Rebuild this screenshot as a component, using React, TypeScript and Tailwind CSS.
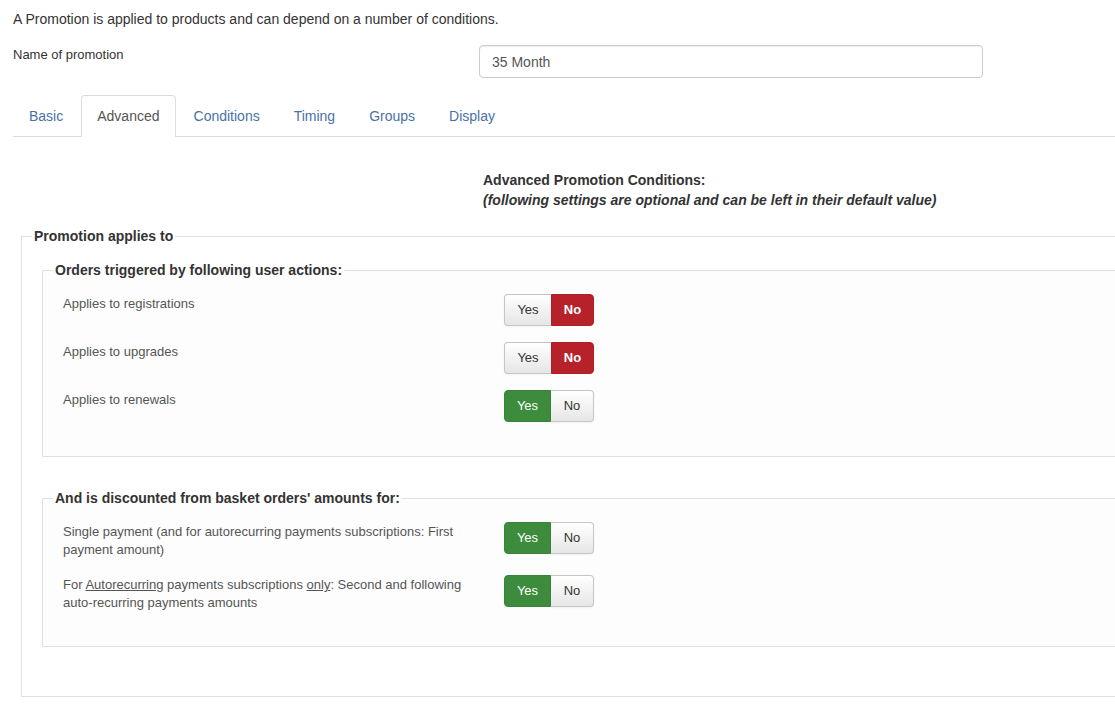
import React from "react";

function Toggle({ value }: { value: boolean }) {
  const inactive =
    "bg-gradient-to-b from-white to-[#e6e6e6] text-[#333] border border-[#c5c5c5] shadow-[inset_0_1px_0_rgba(255,255,255,0.2),0_1px_2px_rgba(0,0,0,0.05)]";
  return (
    <div className="flex h-[32px] shrink-0 text-[13px] leading-[18px]">
      <div
        className={
          "w-[47px] flex items-center justify-center rounded-l-[4px] " +
          (value ? "bg-[#3d8b3d] text-white border border-[#3a833a]" : inactive + " border-r-0")
        }
      >
        Yes
      </div>
      <div
        className={
          "w-[43px] flex items-center justify-center rounded-r-[4px] " +
          (!value ? "bg-[#b7222a] text-white font-bold border border-[#b01f27]" : inactive + " border-l-0")
        }
      >
        No
      </div>
    </div>
  );
}

function Row({ label, value }: { label: React.ReactNode; value: boolean }) {
  return (
    <div className="flex items-start">
      <div className="w-[441px] pt-px pr-[30px] text-[13px] leading-[18px] text-[#555]">{label}</div>
      <Toggle value={value} />
    </div>
  );
}

export default function App() {
  const tabs = ["Basic", "Advanced", "Conditions", "Timing", "Groups", "Display"];
  return (
    <div
      className="w-[1115px] h-[713px] overflow-hidden bg-white text-[#333]"
      style={{ fontFamily: '"Liberation Sans", Arial, sans-serif' }}
    >
      <div className="pl-[13px] w-[1200px]">
        <p className="pt-[9px] text-[14px] leading-[20px] text-[#333]">
          A Promotion is applied to products and can depend on a number of conditions.
        </p>
        <div className="flex items-start mt-[16px]">
          <div className="w-[466px] pt-px text-[13px] leading-[18px] text-[#333]">Name of promotion</div>
          <div className="w-[504px] h-[33px] border border-[#ccc] rounded-[4px] shadow-[inset_0_1px_1px_rgba(0,0,0,0.075)] flex items-center pl-[12px] pt-[2px] text-[14px] text-[#555]">
            35 Month
          </div>
        </div>

        <div className="mt-[17px] flex border-b border-[#ddd] w-[1102px]">
          {tabs.map((t, i) => (
            <div
              key={t}
              className={
                "mr-[2px] px-[15px] py-[10px] text-[14px] leading-[20px] border border-b-0 rounded-t-[4px] " +
                (i === 1
                  ? "border-[#ddd] bg-white text-[#555] -mb-px pb-[11px]"
                  : "border-transparent text-[#4872a8]")
              }
            >
              {t}
            </div>
          ))}
        </div>

        <div className="ml-[470px] mt-[33px] text-[14px] leading-[20px] font-bold text-[#333]">
          <div>Advanced Promotion Conditions:</div>
          <div className="italic">(following settings are optional and can be left in their default value)</div>
        </div>

        <fieldset className="ml-[8px] mt-[16px] w-[1130px] border border-[#e0e0e0] pl-[10px] pr-[10px] pb-[49px]">
          <legend className="px-[2px] text-[14px] leading-[20px] font-bold text-[#333]">Promotion applies to</legend>
          <fieldset className="mt-[14px] ml-[10px] border border-[#e0e0e0] bg-[#fdfdfd] pl-[10px] pb-[34px]">
            <legend className="px-[2px] text-[14px] leading-[20px] font-bold text-[#333]">
              Orders triggered by following user actions:
            </legend>
            <div className="ml-[10px] mt-[14px] flex flex-col gap-[16px]">
              <Row label="Applies to registrations" value={false} />
              <Row label="Applies to upgrades" value={false} />
              <Row label="Applies to renewals" value={true} />
            </div>
          </fieldset>
          <fieldset className="mt-[31px] ml-[10px] border border-[#e0e0e0] bg-[#fdfdfd] pl-[10px] pb-[34px]">
            <legend className="px-[2px] text-[14px] leading-[20px] font-bold text-[#333]">
              And is discounted from basket orders' amounts for:
            </legend>
            <div className="ml-[10px] mt-[14px] flex flex-col gap-[16px]">
              <Row
                label="Single payment (and for autorecurring payments subscriptions: First payment amount)"
                value={true}
              />
              <Row
                label={
                  <>
                    <span className="block">
                      <span>For </span>
                      <u>Autorecurring</u>
                      <span> payments subscriptions </span>
                      <u>only</u>
                      <span>: Second and following</span>
                    </span>
                    <span className="block">auto-recurring payments amounts</span>
                  </>
                }
                value={true}
              />
            </div>
          </fieldset>
        </fieldset>
      </div>
    </div>
  );
}
